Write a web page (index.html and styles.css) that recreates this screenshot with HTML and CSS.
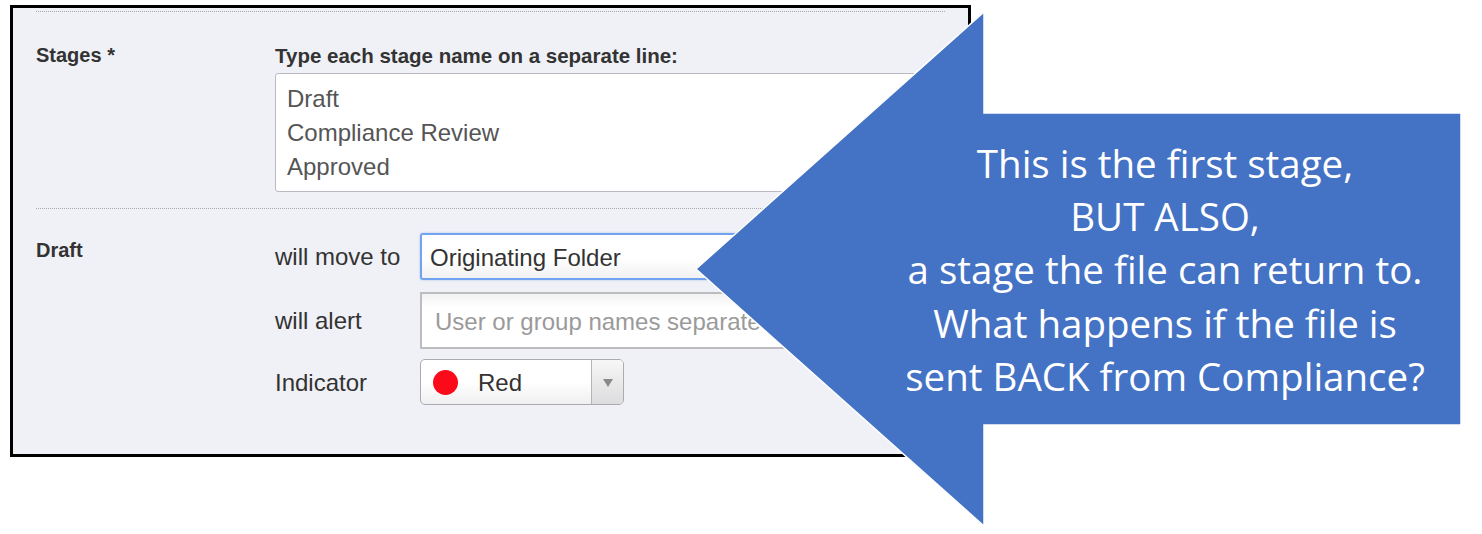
FILE: index.html
```html
<!DOCTYPE html>
<html lang="en">
<head>
<meta charset="utf-8">
<title>Workflow stages</title>
<link rel="stylesheet" href="styles.css">
</head>
<body>
<div class="stage">
  <div class="panel">
    <div class="row">
      <div class="label">Stages *</div>
      <div class="field">
        <div class="hint">Type each stage name on a separate line:</div>
        <div class="textarea">
          <div>Draft</div>
          <div>Compliance Review</div>
          <div>Approved</div>
        </div>
      </div>
    </div>
    <div class="row row-draft">
      <div class="label label-draft">Draft</div>
      <div class="controls">
        <span class="flabel">will move to</span>
        <div class="input input-focus">Originating Folder</div>
        <span class="flabel">will alert</span>
        <div class="input input-alert"><span class="placeholder">User or group names separated by commas</span></div>
        <span class="flabel">Indicator</span>
        <div class="select">
          <span class="dot"></span>
          <span class="select-text">Red</span>
          <span class="caret-box"><span class="caret"></span></span>
        </div>
      </div>
    </div>
  </div>

  <div class="callout">
    <svg class="callout-shape" width="1482" height="534" viewBox="0 0 1482 534" aria-hidden="true">
      <polygon points="696,269 984,12 984,113 1461,113 1461,425 984,425 984,526" fill="#4472c4" stroke="#ffffff" stroke-width="1.5" stroke-linejoin="miter"/>
    </svg>
    <div class="callout-text">
      <div>This is the first stage,</div>
      <div>BUT ALSO,</div>
      <div>a stage the file can return to.</div>
      <div>What happens if the file is</div>
      <div>sent BACK from Compliance?</div>
    </div>
  </div>
</div>
</body>
</html>
```

FILE: styles.css
```css
* { box-sizing: border-box; }

html, body {
  margin: 0;
  padding: 0;
  background: #ffffff;
}

.stage {
  position: relative;
  width: 1482px;
  height: 534px;
  overflow: hidden;
  padding: 5px 0 0 10px;
  font-family: "Liberation Sans", Arial, sans-serif;
  color: #333333;
}

.panel {
  width: 961px;
  height: 452px;
  border: 3px solid #000000;
  background: #f0f1f6;
  overflow: hidden;
  padding: 3px 23px 0 23px;
}

.row {
  display: grid;
  grid-template-columns: 239px 1fr;
  border-top: 1px dotted #a9a9b0;
  padding: 32px 0 16px 0;
}

.row-draft {
  padding-top: 24px;
}

.label {
  font-size: 20px;
  line-height: 23px;
  font-weight: bold;
  color: #333333;
}

.label-draft {
  padding-top: 6px;
}

.hint {
  font-size: 20.5px;
  line-height: 23px;
  font-weight: bold;
  color: #333333;
  margin-bottom: 6px;
}

.textarea {
  background: #ffffff;
  border: 1px solid #b9bac2;
  border-radius: 3px;
  padding: 8px 11px 7px 11px;
  font-size: 24px;
  line-height: 34px;
  color: #555555;
}

.controls {
  display: grid;
  grid-template-columns: 145px 1fr;
  align-items: center;
  row-gap: 12px;
}

.controls .select { margin-top: -2px; }

.flabel {
  font-size: 24px;
  line-height: 28px;
  color: #333333;
}

.input {
  display: flex;
  align-items: center;
  font-size: 24px;
  color: #333333;
  background: #ffffff;
}

.input-focus {
  height: 47px;
  border: 2px solid #72a3ee;
  border-radius: 3px;
  padding-left: 8px;
  padding-top: 2px;
  background: linear-gradient(#ffffff 55%, #f1f1f3);
  box-shadow: 0 0 2px rgba(80, 140, 230, 0.5);
}

.input-alert {
  height: 57px;
  border: 2px solid #bdbdc1;
  padding-left: 13px;
  padding-top: 2px;
  background: linear-gradient(#f2f2f2, #ffffff 25%);
}

.placeholder {
  color: #9a9a9a;
  white-space: nowrap;
}

.select {
  display: flex;
  align-items: stretch;
  width: 204px;
  height: 46px;
  border: 1px solid #acacb0;
  border-radius: 5px;
  background: linear-gradient(#ffffff 50%, #efeff1);
  overflow: hidden;
}

.dot {
  width: 25px;
  height: 25px;
  border-radius: 50%;
  background: #fb0a1a;
  align-self: center;
  margin-left: 12px;
}

.select-text {
  flex: 1;
  display: flex;
  align-items: center;
  padding-left: 20px;
  padding-top: 2px;
  font-size: 24px;
  color: #333333;
}

.caret-box {
  width: 32px;
  border-left: 1px solid #b5b5b9;
  background: linear-gradient(#f7f7f7, #dcdcde);
  display: flex;
  align-items: center;
  justify-content: center;
}

.caret {
  width: 0;
  height: 0;
  border-left: 5px solid transparent;
  border-right: 5px solid transparent;
  border-top: 8px solid #8a8a8a;
  margin-top: 2px;
}

.callout {
  position: absolute;
  left: 0;
  top: 0;
  width: 1482px;
  height: 534px;
}

.callout-shape {
  position: absolute;
  left: 0;
  top: 0;
}

.callout-text {
  position: absolute;
  left: 865px;
  top: 136.5px;
  width: 600px;
  text-align: center;
  font-family: "Open Sans", Lato, sans-serif;
  font-size: 38.5px;
  line-height: 53.4px;
  color: #ffffff;
  white-space: nowrap;
}
```
